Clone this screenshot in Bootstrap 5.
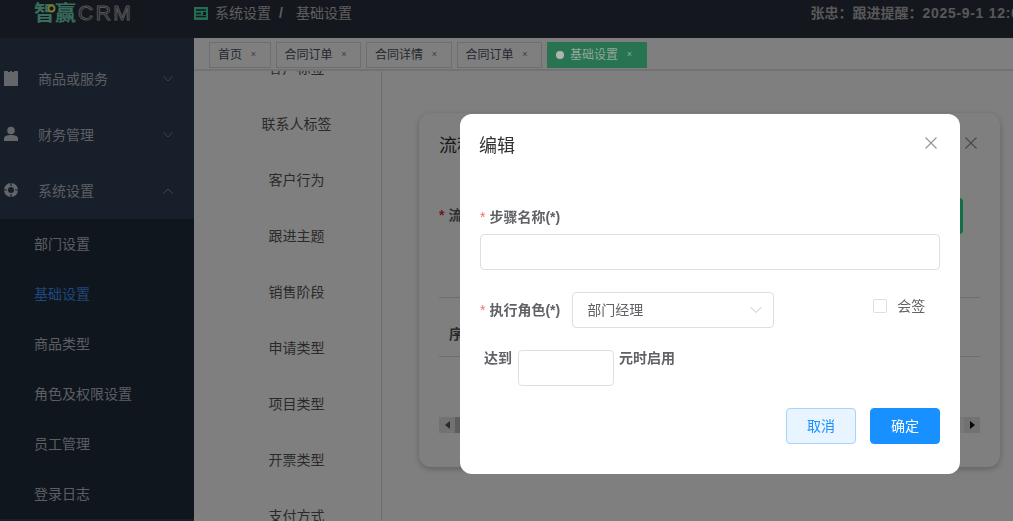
<!doctype html>
<html lang="zh">
<head>
<meta charset="utf-8">
<title>基础设置</title>
<link href="https://cdn.jsdelivr.net/npm/bootstrap@5.3.0/dist/css/bootstrap.min.css" rel="stylesheet">
<style>
html,body{height:100%;overflow:hidden}
body{font-family:"Liberation Sans","Noto Sans CJK SC",sans-serif;font-size:14px;color:#303133;background:#fff}
.topbar{height:38px;background:#2b2f3f;color:#ccc}
.logo-box{width:194px;padding:2px 0 0 34px;overflow:hidden;height:38px}
.logo-txt{font-size:21px;line-height:21px;font-weight:700;color:#6fdcb8;white-space:nowrap;position:relative}
.logo-crm{color:transparent;-webkit-text-stroke:1px #a8a8a8;font-weight:400;font-size:21px;letter-spacing:2.500px;margin-left:2px}
.logo-ring{position:absolute;left:13px;top:2px}
.crumb{font-size:14px;color:#bbb;height:26px}
.crumb svg{margin-right:7px}
.crumb b{width:25px;padding-left:8px;font-weight:700}
.notice{font-size:14px;font-weight:700;color:#b0b0b0;white-space:nowrap;margin-left:auto;margin-right:-15px;height:26px}
.notice span{letter-spacing:.7px}
.side{width:194px;background:#2f3e56;color:#bbb;flex:none}
.side-gap{height:13px}
.menu-row{height:56px;color:#b9bcc2;padding-left:4px;padding-right:21px}
.menu-row svg.ic{width:14px;height:16px;margin-right:20px;flex:none;margin-top:-2px}
.menu-row .chev{width:10px;height:6px;margin-left:auto}
.submenu{background:#1f2c3c}
.sub-row{height:50px;padding-left:34px;color:#b9bcc2;display:flex;align-items:center}
.sub-on{color:#3f8ef0}
.work{min-width:0;background:#fff}
.tabbar{height:34px;border-bottom:2px solid #e4e4e4;padding:4px 0 0 15px;gap:5px;background:#fff}
.tabx{height:26px;border:1px solid #d8dce5;padding:0 8px;font-size:12px;color:#495060;background:#fff;display:flex;align-items:center;white-space:nowrap}
.tabx i{font-style:normal;font-size:9px;color:#777;width:19.500px;padding-left:3px;text-align:center}
.tab-on{background:#287350;border-color:#287350;color:#93a89c;position:relative;z-index:1051;padding-right:8px}
.tab-on i{color:#93a89c}
.tab-dot{width:8px;height:8px;border-radius:50%;background:#b0b5b0;margin-right:6px}
.cat{width:188px;flex:none;border-right:1px solid #d8d8d8;overflow:hidden;text-align:center;color:#555}
.cat-item{height:56px;display:flex;align-items:center;justify-content:center;padding-left:18px}
.cat-item:first-child{margin-top:-30px}
.pane{padding:42px 13px 0 37px;min-width:0}
.bgcard{height:354px;border-radius:12px;box-shadow:0 2px 6px rgba(0,0,0,.25);padding:20px 20px;background:#fff}
.bg-title{font-size:18px;line-height:22px;padding-top:2px;box-sizing:content-box}
.bg-x{width:12px;height:12px;margin-right:3px;margin-top:-4px}
.bg-row{height:36px;margin-top:41px;font-weight:700;color:#606266}
.bg-btn{width:70px;height:36px;background:#1fe088;border-radius:4px;margin-left:auto;margin-right:17px}
.bg-line{border-top:1px solid #ddd;height:59px;margin-top:63px;display:flex;align-items:center;padding:16px 0 0 10px;font-weight:700;color:#555}
.bg-line2{border-top:1px solid #ddd;height:61px}
.bg-scroll{height:16px;background:#f1f1f1}
.bg-scroll span{width:16px;height:16px;display:flex;align-items:center;justify-content:center;background:#e4e4e4}
.bg-thumb{width:6px;height:16px;background:#bbb}
.dlg.modal-dialog{max-width:none;width:500px;margin:114px 0 0 460px}
.modal.d-block{overflow:hidden}
.dlg .modal-content{height:360px;border:0;border-radius:12px;padding:19px 20px;display:block}
.dlg-title{font-size:18px;line-height:24px;color:#303133;font-weight:400;margin-left:-1px;padding-top:1px;box-sizing:content-box}
.dlg-x{width:12px;height:12px;margin-right:3px;margin-top:4px}
.lbl{font-weight:700;color:#606266;line-height:20px;white-space:nowrap;flex:none}
.lbl em{font-style:normal;font-weight:400;color:#f56c6c;margin-right:4px}
.f-name{margin-top:49px}
.fld.form-control,.fld.form-select{height:36px;border:1px solid #dcdfe6;border-radius:4px;font-size:14px;color:#606266;padding:0 15px;box-shadow:none;font-family:inherit}
.f-input{margin-top:7px}
.f-role{margin-top:22px;height:36px}
.sel-w{width:202px;flex:none;margin-left:12px}
.fld.form-select{padding-left:14px;background-size:12px 8px;background-position:right 11px center}
.chk.form-check-input{width:14px;height:14px;margin:0 10px 0 0;border:1px solid #dcdfe6;border-radius:2px;float:none;flex:none}
.chk-wrap{margin-left:99px;color:#606266;margin-top:-8px;white-space:nowrap;flex:none}
.f-reach{margin-top:22px;padding-left:4px;align-items:flex-start}
.f-reach .lbl{margin-top:-2px}
.num-w{width:96px;flex:none;margin:0 5px 0 6px}
.acts{margin-top:22px;gap:14px}
.act{width:70px;height:36px;border-radius:4px;font-size:14px;padding:0;line-height:34px}
.act-a.btn{background:#e8f4ff;border:1px solid #a3d3ff;color:#1890ff}
.act-b.btn{background:#1890ff;border:1px solid #1890ff;color:#fff}
</style>
</head>
<body>
<div class="d-flex flex-column h-100">
  <header class="topbar d-flex flex-none">
    <div class="logo-box"><div class="logo-txt">智赢<span class="logo-crm">CRM</span><svg class="logo-ring" width="9" height="9" viewBox="0 0 9 9"><circle cx="4.500" cy="4.500" r="3" fill="#2b2f3f" stroke="#e8f060" stroke-width="2"/></svg></div></div>
    <div class="crumb d-flex align-items-center">
      <svg width="14" height="13" viewBox="0 0 14 13"><rect width="14" height="13" fill="#46dca0"/><path d="M2 3h10M2 6.500h5M2 9.500h10" stroke="#2b2f3f" stroke-width="1.400"/><rect x="9" y="5" width="3" height="3" fill="#2b2f3f"/></svg>
      <span>系统设置</span><b>/</b><span>基础设置</span>
    </div>
    <div class="notice d-flex align-items-center">张忠：跟进提醒：<span>2025-9-1 12:00</span></div>
  </header>
  <div class="d-flex flex-grow-1" style="min-height:0">
    <aside class="side overflow-hidden">
      <div class="side-gap"></div>
      <div class="menu-row d-flex align-items-center">
        <svg class="ic" viewBox="0 0 14 16"><path d="M0 1h4v1h2V1h2v1h2V1h4v15H0z" fill="#c9ccd2"/></svg><span>商品或服务</span>
        <svg class="chev" viewBox="0 0 10 6"><path d="M.5.500 5 5 9.500.500" fill="none" stroke="#7f8794"/></svg>
      </div>
      <div class="menu-row d-flex align-items-center">
        <svg class="ic" viewBox="0 0 14 16"><circle cx="7" cy="4.500" r="3.800" fill="#c9ccd2"/><path d="M0 15v-2.500C0 10 3 9 7 9s7 1 7 3.500V15z" fill="#c9ccd2"/></svg><span>财务管理</span>
        <svg class="chev" viewBox="0 0 10 6"><path d="M.5.500 5 5 9.500.500" fill="none" stroke="#7f8794"/></svg>
      </div>
      <div class="menu-row d-flex align-items-center">
        <svg class="ic" viewBox="0 0 14 16"><circle cx="7" cy="8" r="5" fill="none" stroke="#c9ccd2" stroke-width="4"/><path d="M7 1v3M7 12v3M0 8h3M11 8h3" stroke="#2f3e56" stroke-width="1.200"/></svg><span>系统设置</span>
        <svg class="chev" viewBox="0 0 10 6"><path d="M.5 5.500 5 1l4.500 4.500" fill="none" stroke="#7f8794"/></svg>
      </div>
      <div class="submenu">
        <div class="sub-row">部门设置</div>
        <div class="sub-row sub-on">基础设置</div>
        <div class="sub-row">商品类型</div>
        <div class="sub-row">角色及权限设置</div>
        <div class="sub-row">员工管理</div>
        <div class="sub-row">登录日志</div>
      </div>
    </aside>
    <main class="work flex-grow-1 d-flex flex-column">
      <nav class="tabbar d-flex flex-none">
        <div class="tabx">首页<i>×</i></div>
        <div class="tabx">合同订单<i>×</i></div>
        <div class="tabx">合同详情<i>×</i></div>
        <div class="tabx">合同订单<i>×</i></div>
        <div class="tabx tab-on"><span class="tab-dot"></span>基础设置<i>×</i></div>
      </nav>
      <div class="d-flex flex-grow-1" style="min-height:0">
        <div class="cat">
          <div class="cat-item">客户标签</div>
          <div class="cat-item">联系人标签</div>
          <div class="cat-item">客户行为</div>
          <div class="cat-item">跟进主题</div>
          <div class="cat-item">销售阶段</div>
          <div class="cat-item">申请类型</div>
          <div class="cat-item">项目类型</div>
          <div class="cat-item">开票类型</div>
          <div class="cat-item">支付方式</div>
        </div>
        <div class="pane flex-grow-1">
          <div class="bgcard">
            <div class="d-flex justify-content-between align-items-center">
              <div class="bg-title">流程</div>
              <svg class="bg-x" viewBox="0 0 12 12"><path d="M.5.500l11 11M11.500.500l-11 11" stroke="#909399" stroke-width="1.200"/></svg>
            </div>
            <div class="bg-row d-flex align-items-center"><span class="text-danger me-1">*</span>流程名称<span class="bg-btn"></span></div>
            <div class="bg-line">序号</div>
            <div class="bg-line2"></div>
            <div class="bg-scroll d-flex justify-content-between">
              <div class="d-flex"><span><svg width="5" height="8"><path d="M5 0v8L0 4z" fill="#555"/></svg></span><div class="bg-thumb"></div></div>
              <span><svg width="5" height="8"><path d="M0 0v8l5-4z" fill="#111"/></svg></span>
            </div>
          </div>
        </div>
      </div>
    </main>
  </div>
</div>

<div class="modal-backdrop show"></div>
<div class="modal d-block">
  <div class="modal-dialog dlg">
    <div class="modal-content">
      <div class="d-flex justify-content-between align-items-start">
        <div class="dlg-title">编辑</div>
        <svg class="dlg-x" viewBox="0 0 12 12"><path d="M.5.500l11 11M11.500.500l-11 11" stroke="#909399" stroke-width="1.100"/></svg>
      </div>
      <div class="lbl f-name"><em>*</em>步骤名称(*)</div>
      <input class="form-control fld f-input" type="text">
      <div class="d-flex align-items-center f-role">
        <div class="lbl"><em>*</em>执行角色(*)</div>
        <select class="form-select fld sel-w" style="background-image:url(&quot;data:image/svg+xml,%3csvg xmlns='http://www.w3.org/2000/svg' viewBox='0 0 12 8'%3e%3cpath fill='none' stroke='%23c0c4cc' d='M.5 1 6 6.500 11.500 1'/%3e%3c/svg%3e&quot;)"><option>部门经理</option></select>
        <label class="chk-wrap d-flex align-items-center"><input class="form-check-input chk" type="checkbox"><span>会签</span></label>
      </div>
      <div class="d-flex f-reach">
        <div class="lbl">达到</div>
        <input class="form-control fld num-w" type="text">
        <div class="lbl">元时启用</div>
      </div>
      <div class="d-flex justify-content-end acts">
        <button class="btn act act-a">取消</button>
        <button class="btn act act-b">确定</button>
      </div>
    </div>
  </div>
</div>
<script src="https://cdn.jsdelivr.net/npm/bootstrap@5.3.0/dist/js/bootstrap.bundle.min.js"></script>
</body>
</html>
